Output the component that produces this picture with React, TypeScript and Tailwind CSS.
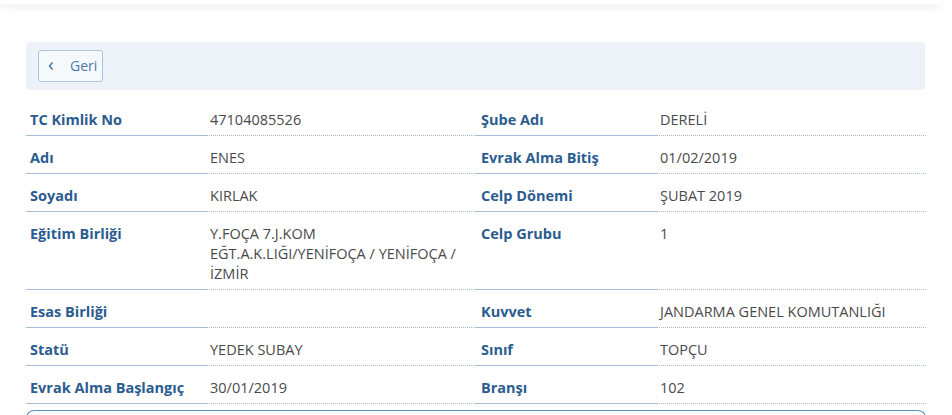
import React from "react";

interface Field {
  label: string;
  value: string[];
}

const rows: [Field, Field][] = [
  [
    { label: "TC Kimlik No", value: ["47104085526"] },
    { label: "Şube Adı", value: ["DERELİ"] },
  ],
  [
    { label: "Adı", value: ["ENES"] },
    { label: "Evrak Alma Bitiş", value: ["01/02/2019"] },
  ],
  [
    { label: "Soyadı", value: ["KIRLAK"] },
    { label: "Celp Dönemi", value: ["ŞUBAT 2019"] },
  ],
  [
    {
      label: "Eğitim Birliği",
      value: ["Y.FOÇA 7.J.KOM", "EĞT.A.K.LIĞI/YENİFOÇA / YENİFOÇA /", "İZMİR"],
    },
    { label: "Celp Grubu", value: ["1"] },
  ],
  [
    { label: "Esas Birliği", value: [] },
    { label: "Kuvvet", value: ["JANDARMA GENEL KOMUTANLIĞI"] },
  ],
  [
    { label: "Statü", value: ["YEDEK SUBAY"] },
    { label: "Sınıf", value: ["TOPÇU"] },
  ],
  [
    { label: "Evrak Alma Başlangıç", value: ["30/01/2019"] },
    { label: "Branşı", value: ["102"] },
  ],
];

function Cells({ field, first }: { field: Field; first?: boolean }) {
  return (
    <>
      <div
        className={`w-[20%] border-b border-[#a3bfd9] pt-[12px] pb-[5px] ${
          first ? "pl-[4px]" : "pl-[5px]"
        } font-bold text-[#2b5c90]`}
      >
        {field.label}
      </div>
      <div className="w-[30%] border-b border-dotted border-[#a9b9ca] pt-[12px] pb-[5px] pl-[4px] text-[#4a4a4a]">
        {field.value.map((line, i) => (
          <div key={i}>{line}</div>
        ))}
      </div>
    </>
  );
}

export default function App() {
  return (
    <div
      className="min-h-screen bg-white text-[14.5px] leading-[20px]"
      style={{ fontFamily: '"Open Sans", "Noto Sans", sans-serif' }}
    >
      {/* header edge, scrolled off */}
      <div className="h-[4px] w-[940px] bg-white shadow-[0_2px_8px_rgba(0,0,0,0.12)]" />

      <div className="px-[26px] pt-[38px]">
        <div className="flex h-[48px] items-center rounded-[4px] bg-[#edf1f8] pl-[12px] w-[899px]">
          <button className="flex h-[32px] w-[65px] items-center rounded-[3px] border border-[#a9c6e2] bg-[#f6f9fc] pl-[8px] text-[14px] text-[#4a78ad]">
            <svg width="8" height="10" viewBox="0 0 8 10" className="mr-[15px]">
              <path d="M5.5 1.5 L2.5 5 L5.5 8.5" fill="none" stroke="#3f6fa6" strokeWidth="1.4" />
            </svg>
            <span>Geri</span>
          </button>
        </div>

        <div className="mt-[8px] w-[900px]">
          {rows.map(([a, b], i) => (
            <div key={i} className="flex">
              <Cells field={a} first />
              <Cells field={b} />
            </div>
          ))}
        </div>

        <div className="mt-[6px] h-[20px] w-[900px] rounded-t-[8px] border border-b-0 border-[#5b8fc9] bg-[#f7fafd]" />
      </div>
    </div>
  );
}
